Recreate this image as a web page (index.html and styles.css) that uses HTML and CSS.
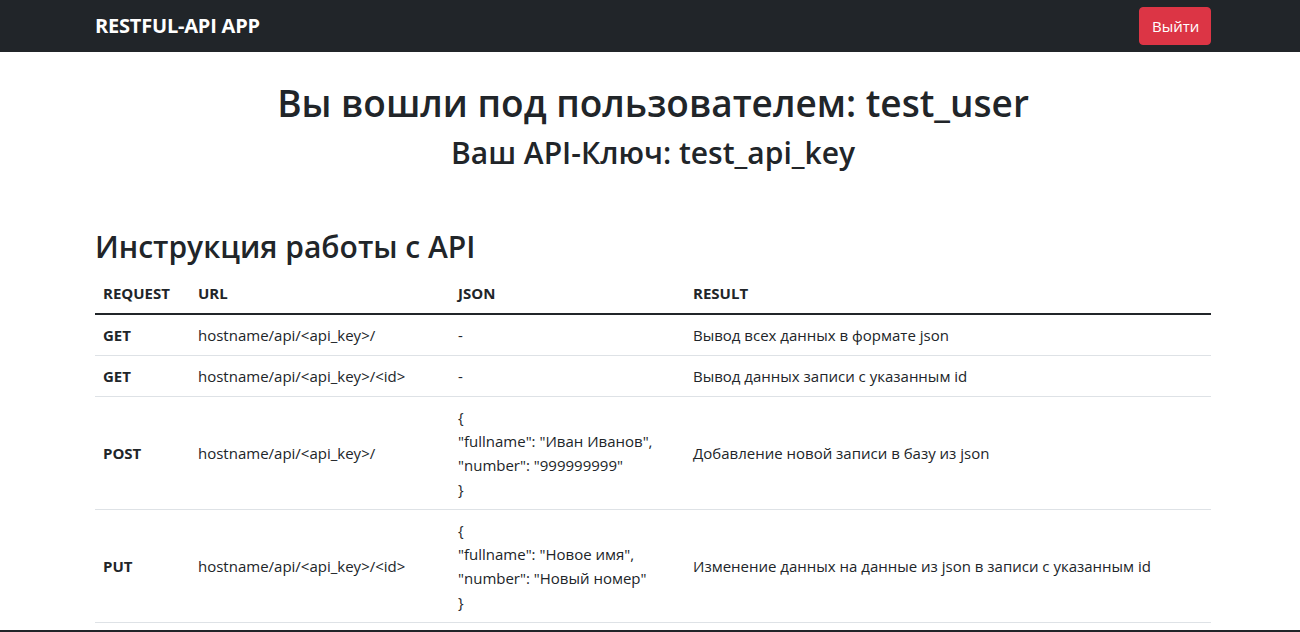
FILE: index.html
```html
<!DOCTYPE html>
<html lang="ru">
<head>
<meta charset="utf-8">
<title>RESTFUL-API APP</title>
<link rel="stylesheet" href="styles.css">
</head>
<body>
<nav class="navbar">
  <div class="container nav-inner">
    <a class="brand" href="#">RESTFUL-API APP</a>
    <button class="btn-logout" type="button">Выйти</button>
  </div>
</nav>
<main class="container">
  <section class="welcome">
    <h1 class="title">Вы вошли под пользователем: test_user</h1>
    <h2 class="subtitle">Ваш API-Ключ: test_api_key</h2>
  </section>
  <h2 class="section-title">Инструкция работы с API</h2>
  <table class="api-table">
    <colgroup>
      <col class="c1"><col class="c2"><col class="c3"><col class="c4">
    </colgroup>
    <thead>
      <tr><th>REQUEST</th><th>URL</th><th>JSON</th><th>RESULT</th></tr>
    </thead>
    <tbody>
      <tr>
        <td class="method">GET</td>
        <td>hostname/api/&lt;api_key&gt;/</td>
        <td>-</td>
        <td>Вывод всех данных в формате json</td>
      </tr>
      <tr>
        <td class="method">GET</td>
        <td>hostname/api/&lt;api_key&gt;/&lt;id&gt;</td>
        <td>-</td>
        <td>Вывод данных записи с указанным id</td>
      </tr>
      <tr>
        <td class="method">POST</td>
        <td>hostname/api/&lt;api_key&gt;/</td>
        <td>{<br>"fullname": "Иван Иванов",<br>"number": "999999999"<br>}</td>
        <td>Добавление новой записи в базу из json</td>
      </tr>
      <tr>
        <td class="method">PUT</td>
        <td>hostname/api/&lt;api_key&gt;/&lt;id&gt;</td>
        <td>{<br>"fullname": "Новое имя",<br>"number": "Новый номер"<br>}</td>
        <td>Изменение данных на данные из json в записи с указанным id</td>
      </tr>
    </tbody>
  </table>
</main>
<div class="window-edge"></div>
</body>
</html>
```
FILE: styles.css
```css
* { box-sizing: border-box; }
html, body { margin: 0; padding: 0; }
body {
  font-family: "Open Sans", "Noto Sans", "Liberation Sans", sans-serif;
  font-size: 16px;
  line-height: 1.5;
  color: #212529;
  background: #fff;
}
.container {
  width: 1116px;
  margin-left: 95px;
}
.navbar {
  background: #212529;
  height: 52px;
}
.nav-inner {
  height: 52px;
  display: flex;
  align-items: center;
  justify-content: space-between;
}
.brand {
  color: #fff;
  text-decoration: none;
  font-weight: 700;
  font-size: 20px;
  letter-spacing: -0.2px;
}
.btn-logout {
  font-family: inherit;
  font-size: 15px;
  line-height: 1.5;
  color: #fff;
  background: #dc3545;
  border: 1px solid #dc3545;
  border-radius: 4px;
  padding: 6px 12px;
  height: 38px;
  width: 72px;
}
.welcome {
  text-align: center;
  padding-top: 27px;
}
.title {
  margin: 0;
  font-size: 37px;
  font-weight: 600;
  line-height: 48px;
}
.subtitle {
  margin: 6px 0 0;
  font-size: 30px;
  font-weight: 600;
  line-height: 40px;
}
.section-title {
  margin: 54px 0 6px;
  font-size: 30px;
  font-weight: 600;
  line-height: 40px;
}
.api-table {
  width: 100%;
  border-collapse: collapse;
  table-layout: fixed;
  font-size: 15px;
}
.c1 { width: 95px; }
.c2 { width: 260px; }
.c3 { width: 235px; }
.c4 { width: auto; }
.api-table th {
  text-align: left;
  font-weight: 700;
  padding: 8px;
  line-height: 24px;
  vertical-align: bottom;
  border-bottom: 2px solid #212529;
}
.api-table td {
  padding: 8px;
  line-height: 24px;
  vertical-align: middle;
  border-bottom: 1px solid #dee2e6;
}
.api-table td.method { font-weight: 700; }
.window-edge {
  position: fixed;
  left: 0;
  right: 0;
  bottom: 0;
  height: 2px;
  background: #212529;
}
```
